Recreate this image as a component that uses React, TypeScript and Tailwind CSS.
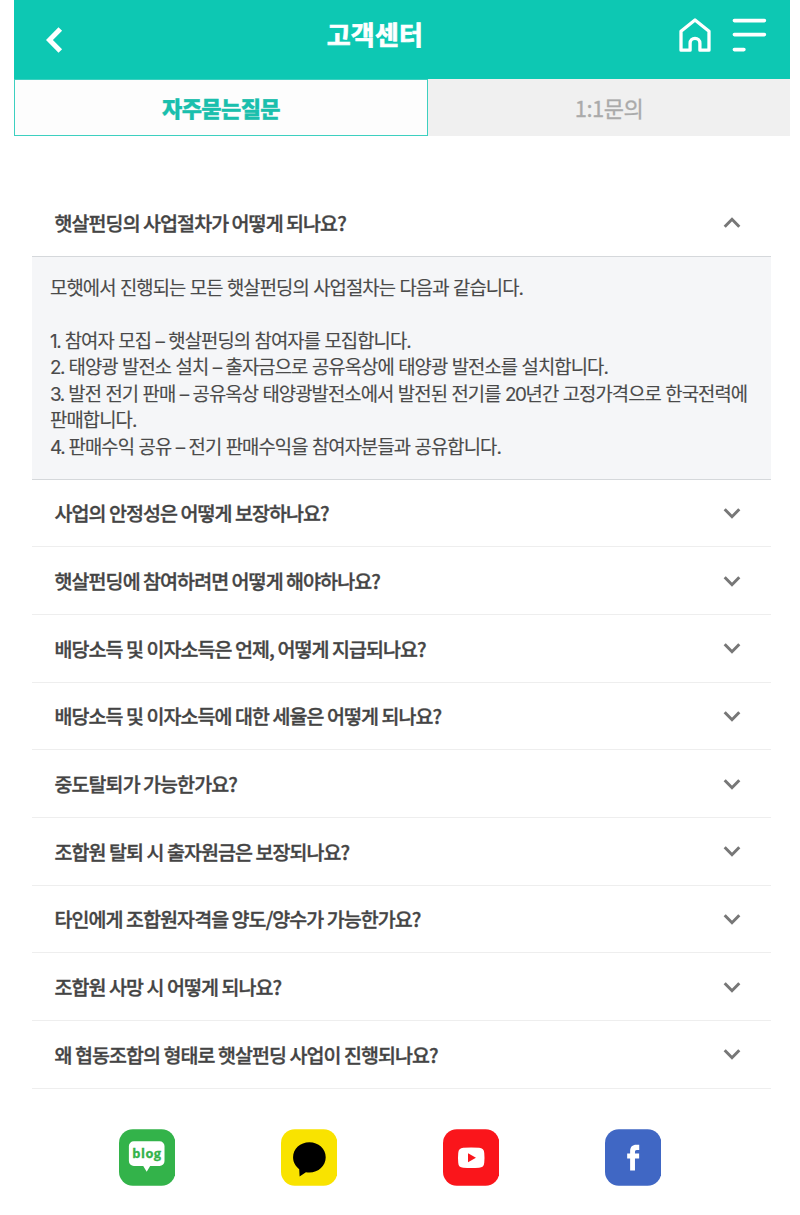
import React, { useState } from "react";

const questions = [
  "햇살펀딩의 사업절차가 어떻게 되나요?",
  "사업의 안정성은 어떻게 보장하나요?",
  "햇살펀딩에 참여하려면 어떻게 해야하나요?",
  "배당소득 및 이자소득은 언제, 어떻게 지급되나요?",
  "배당소득 및 이자소득에 대한 세율은 어떻게 되나요?",
  "중도탈퇴가 가능한가요?",
  "조합원 탈퇴 시 출자원금은 보장되나요?",
  "타인에게 조합원자격을 양도/양수가 가능한가요?",
  "조합원 사망 시 어떻게 되나요?",
  "왜 협동조합의 형태로 햇살펀딩 사업이 진행되나요?",
];

const answer = [
  "모햇에서 진행되는 모든 햇살펀딩의 사업절차는 다음과 같습니다.",
  "",
  "1. 참여자 모집 – 햇살펀딩의 참여자를 모집합니다.",
  "2. 태양광 발전소 설치 – 출자금으로 공유옥상에 태양광 발전소를 설치합니다.",
  "3. 발전 전기 판매 – 공유옥상 태양광발전소에서 발전된 전기를 20년간 고정가격으로 한국전력에",
  "판매합니다.",
  "4. 판매수익 공유 – 전기 판매수익을 참여자분들과 공유합니다.",
];

function Header() {
  return (
    <header className="flex h-[79px] bg-[#0dc8b3] text-white">
      <div className="flex w-[146px] pt-[27px] pl-[32px]">
        <svg width="17" height="26" viewBox="0 0 17 26" fill="none" stroke="currentColor" strokeWidth="5">
          <path d="M14.3 1.9 3.4 13l10.900 11.100" />
        </svg>
      </div>
      <h1 className="flex-1 pt-[16px] text-center text-[26px] leading-[36px] font-bold tracking-[0.2px] [-webkit-text-stroke:0.7px_white]">고객센터</h1>
      <div className="flex w-[200px] justify-end gap-[21px] pt-[18px] pr-[23px]">
        <svg width="32" height="35" viewBox="0 0 32 35" fill="none" stroke="currentColor" strokeWidth="3.3" strokeLinejoin="round">
          <path d="M16 2 30 13.3V32.2H20.9V25.2a4.9 4.9 0 0 0-9.8 0V32.2H2V13.3Z" />
        </svg>
        <svg width="35" height="35" viewBox="0 0 35 35" fill="none" stroke="currentColor" strokeWidth="3.6" strokeLinecap="round">
          <path d="M2.4 2.6h30M2.4 16.6h30M2.4 31.6h9.5" />
        </svg>
      </div>
    </header>
  );
}

function Chevron({ up }: { up: boolean }) {
  return (
    <svg width="18" height="12" viewBox="0 0 18 12" fill="none" stroke="#777" strokeWidth="3">
      <path d={up ? "M1.7 9.7 9 2.3l7.3 7.4" : "M1.7 2.3 9 9.7l7.3-7.4"} />
    </svg>
  );
}

function AnswerLine({ text }: { text: string }) {
  return (
    <p className="h-[26.4px]">
      {text.split(/(\d+\.?)/).map((part, i) =>
        /^\d/.test(part) ? <span key={i} className="tracking-[-1.35px]">{part}</span> : part,
      )}
    </p>
  );
}

function SocialLinks() {
  return (
    <div className="mt-[40.4px] ml-[105px] flex gap-[105.5px]">
      <svg width="56.4" height="57" viewBox="0 0 57 57">
        <rect width="57" height="57" rx="14" fill="#33b34a" />
        <path d="M15 12h26a5 5 0 0 1 5 5v15a5 5 0 0 1-5 5h-9.500l-3.500 6-3.500-6H15a5 5 0 0 1-5-5V17a5 5 0 0 1 5-5Z" fill="#fff" />
        <text x="28.300" y="29" textAnchor="middle" fontSize="13" fontWeight="700" letterSpacing="0.500" fill="#33b34a" stroke="#33b34a" strokeWidth="0.300" className="font-['Open_Sans',sans-serif]">blog</text>
      </svg>
      <svg width="56.4" height="57" viewBox="0 0 57 57">
        <rect width="57" height="57" rx="14" fill="#f9e300" />
        <path d="M28.700 13.200c-9.200 0-16.500 6.700-16.500 15.100 0 5.200 2.600 9.200 6.200 12l.4 7.500 6.400-4.400c1.100.2 2.300.3 3.500.3 9.200 0 16.500-6.800 16.500-15.400s-7.300-15.100-16.500-15.100Z" fill="#000" />
      </svg>
      <svg width="56.4" height="57" viewBox="0 0 57 57">
        <rect width="57" height="57" rx="14" fill="#fa151b" />
        <path d="M20.500 18.700q8-.6 16 0 5 .3 5.200 5.200.5 4.900 0 9.800-.3 4.800-5.200 5.100-8 .6-16 0-4.900-.3-5.100-5.100-.5-4.900 0-9.800.3-4.900 5.100-5.200Z" fill="#fff" />
        <path d="m25.300 24.200 8 4.600-8 4.600Z" fill="#fa151b" />
      </svg>
      <svg width="56.4" height="57" viewBox="0 0 57 57">
        <rect width="57" height="57" rx="14" fill="#4067c4" />
        <path d="M34.600 15.700v5.200h-2.400c-1.500 0-1.900.8-1.900 2v1.600h4.200v5h-4.200v12.200h-4.900V29.500h-3v-5h3v-2.300c0-4.300 2.300-6.500 6.300-6.500Z" fill="#fff" />
      </svg>
    </div>
  );
}

export default function App() {
  const [open, setOpen] = useState(0);
  return (
    <div className="h-[1215px] w-[800px] overflow-hidden bg-white font-['Noto_Sans_CJK_KR',sans-serif]">
      <div className="ml-[14px] w-[776px]">
        <Header />
        <nav className="flex h-[57px] text-center text-[22px]">
          <button className="w-[414px] border border-solid border-[#3dd0c0] bg-[#fdfdfd] pb-[1px] leading-[34px] font-black tracking-[-0.6px] text-[#1abfad] [-webkit-text-stroke:0.3px_#1abfad]">자주묻는질문</button>
          <button className="flex-1 bg-[#f0f0f0] pb-[2px] leading-[34px] tracking-[-0.5px] text-[#aaa] [-webkit-text-stroke:0.3px_#aaa]">1:1문의</button>
        </nav>
        <main className="mt-[53.6px] mr-[19px] ml-[18px]">
          {questions.map((question, index) => (
            <section key={question}>
              <button
                onClick={() => setOpen(open === index ? -1 : index)}
                className={`flex h-[67.7px] w-full items-center justify-between border-b pr-[30px] pl-[22.6px] text-left text-[19.5px] font-medium tracking-[-0.93px] text-[#444] [-webkit-text-stroke:0.35px_#444] ${open === index ? "border-[#d5d8db]" : "border-[#eeeeee]"}`}
              >
                <span>{question}</span>
                <Chevron up={open === index} />
              </button>
              {open === index && (
                <div className="h-[222.3px] border-b border-[#d5d8db] bg-[#f5f6f8] pt-[19px] pl-[18px] font-['Inter','Noto_Sans_CJK_KR',sans-serif] text-[18.8px] leading-[26.4px] tracking-[-0.9px] whitespace-nowrap text-[#4a4a4a] [-webkit-text-stroke:0.15px_#4a4a4a]">
                  {answer.map((line, i) => (
                    <AnswerLine key={i} text={line} />
                  ))}
                </div>
              )}
            </section>
          ))}
        </main>
        <SocialLinks />
      </div>
    </div>
  );
}
